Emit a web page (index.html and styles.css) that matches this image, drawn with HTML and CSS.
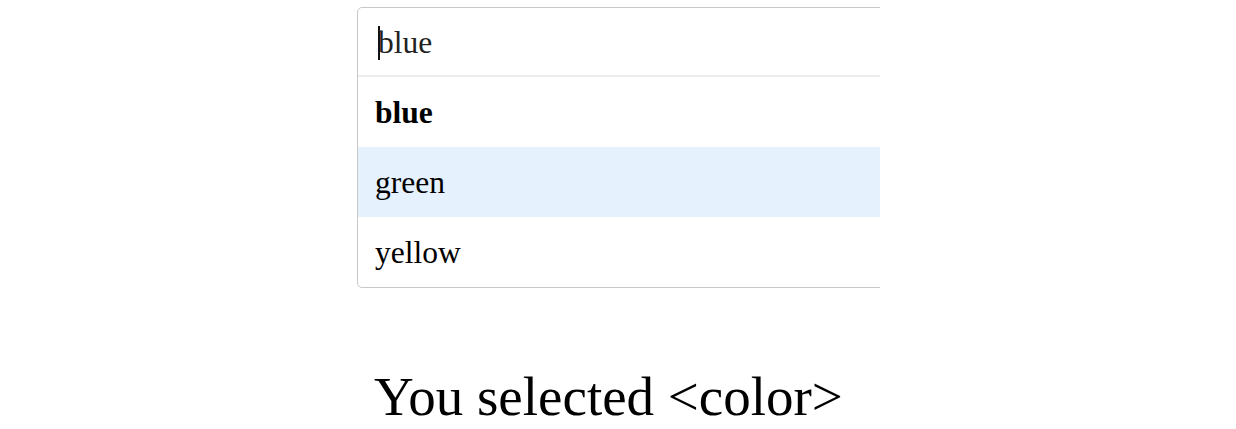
FILE: index.html
```html
<!DOCTYPE html>
<html>
<head>
<meta charset="utf-8">
<link rel="stylesheet" href="styles.css">
</head>
<body>
<div class="page">
  <div class="clip">
    <div class="combo">
      <div class="input"><span class="caret"></span>blue</div>
      <ul class="list">
        <li class="item selected">blue</li>
        <li class="item active">green</li>
        <li class="item">yellow</li>
      </ul>
    </div>
  </div>
  <p class="result">You selected &lt;color&gt;</p>
</div>
</body>
</html>
```
FILE: styles.css
```css
html, body {
  margin: 0;
  padding: 0;
  background: #fff;
}
.page {
  padding: 7px 0 0 357px;
  font-family: "Liberation Serif", "Times New Roman", serif;
  color: #000;
}
.clip {
  width: 523px;
  overflow: hidden;
}
.combo {
  width: 560px;
  border: 1px solid #c8c8c8;
  border-radius: 5px;
  box-sizing: border-box;
  background: #fff;
}
.input {
  height: 65px;
  padding-top: 2px;
  border-bottom: 2px solid #ececec;
  padding-left: 20px;
  font-size: 31.5px;
  line-height: 65px;
  color: #222;
  display: flex;
  align-items: center;
}
.caret {
  display: inline-block;
  width: 2px;
  height: 34px;
  background: #111;
  margin-right: -2px;
}
.list {
  list-style: none;
  margin: 0;
  padding: 0;
}
.item {
  height: 68px;
  padding-top: 2px;
  line-height: 68px;
  padding-left: 17px;
  font-size: 31.5px;
}
.item.selected {
  font-weight: bold;
}
.item.active {
  background: #e5f1fd;
}
.result {
  margin: 78px 0 0 17px;
  font-size: 55px;
  line-height: 62px;
}
```
